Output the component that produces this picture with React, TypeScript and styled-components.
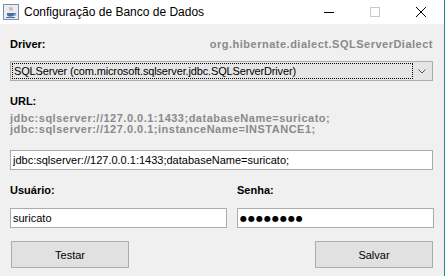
import React from 'react';
import styled, { createGlobalStyle } from 'styled-components';

const GlobalStyle = createGlobalStyle`
  html, body {
    margin: 0;
    padding: 0;
    background: #f0f0f0;
  }
`;

const Window = styled.div`
  box-sizing: border-box;
  width: 445px;
  height: 276px;
  display: flex;
  flex-direction: column;
  border-right: 1px solid #1f8a8a;
  background: #f0f0f0;
  font-family: 'Liberation Sans', Arial, sans-serif;
  overflow: hidden;
`;

const TitleBar = styled.div`
  height: 24px;
  flex: none;
  display: flex;
  align-items: center;
  background: #ffffff;
  padding-left: 3px;
`;

const TitleText = styled.span`
  margin-left: 5px;
  font-size: 12px;
  color: #000;
  flex: 1;
`;

const WinButton = styled.div<{ $w: number }>`
  width: ${(p) => p.$w}px;
  height: 24px;
  display: flex;
  align-items: center;
  justify-content: center;
`;

const Body = styled.div`
  flex: 1;
  display: flex;
  flex-direction: column;
  padding: 13px 11px 0 10px;
`;

const SpreadRow = styled.div`
  display: flex;
  justify-content: space-between;
  align-items: center;
  height: 14px;
`;

const Label = styled.div`
  font-size: 11px;
  font-weight: bold;
  color: #000;
  line-height: 14px;
`;

const Hint = styled.div`
  font-size: 11px;
  font-weight: bold;
  color: #8a8a8a;
  line-height: 11px;
  letter-spacing: 0.5px;
  white-space: nowrap;
`;

const Combo = styled.div`
  box-sizing: border-box;
  height: 20px;
  margin-top: 10px;
  display: flex;
  align-items: center;
  border: 1px solid #adadad;
  background: #e5e5e5;
  padding: 1px;
`;

const ComboValue = styled.div`
  box-sizing: border-box;
  flex: 1;
  height: 16px;
  border: 1px dotted #000;
  font-size: 11px;
  line-height: 14px;
  padding-left: 1px;
  color: #000;
  white-space: nowrap;
  letter-spacing: -0.15px;
`;

const ComboArrow = styled.div`
  width: 18px;
  display: flex;
  justify-content: center;
  align-items: center;
`;

const Field = styled.input<{ $dots?: boolean }>`
  box-sizing: border-box;
  width: 100%;
  height: 20px;
  border: 1px solid #acacac;
  background: #fff;
  font-family: ${(p) => (p.$dots ? "'DejaVu Sans', sans-serif" : "'Liberation Sans', Arial, sans-serif")};
  font-size: ${(p) => (p.$dots ? '8px' : '11px')};
  letter-spacing: ${(p) => (p.$dots ? '1px' : '0')};
  color: #000;
  padding: 0 2px;
  outline: none;
`;

const Section = styled.div<{ $top: number }>`
  margin-top: ${(p) => p.$top}px;
  display: flex;
  flex-direction: column;
`;

const TwoCols = styled.div<{ $top: number }>`
  margin-top: ${(p) => p.$top}px;
  display: grid;
  grid-template-columns: 217px 197px;
  column-gap: 10px;
`;

const Col = styled.div`
  display: flex;
  flex-direction: column;
  gap: 11px;
`;

const Buttons = styled.div`
  margin-top: 13px;
  display: flex;
  justify-content: space-between;
  padding-left: 1px;
`;

const Button = styled.button`
  box-sizing: border-box;
  width: 118px;
  height: 27px;
  border: 1px solid #adadad;
  background: #e1e1e1;
  font-family: 'Liberation Sans', Arial, sans-serif;
  font-size: 11px;
  color: #000;
  padding: 0;
`;

const JavaIcon = () => (
  <svg width="16" height="16" viewBox="0 0 16 16">
    <rect x="0.5" y="0.5" width="15" height="15" fill="#e8eef6" stroke="#7a8fae" />
    <path d="M7 3c-1 1 1 2 0 3.5M9 3.5c-1 1 1 1.8 0 3" stroke="#e07a1f" fill="none" strokeWidth="1" />
    <path d="M4 9h7v1.5c0 1.2-1 2-2 2H6c-1 0-2-.8-2-2z" fill="#4a6fa5" />
    <path d="M11 9.5h1.2c.8 0 .8 1.6 0 1.6H11" stroke="#4a6fa5" fill="none" />
    <path d="M3 13.5h9" stroke="#4a6fa5" />
  </svg>
);

export default function App() {
  return (
    <>
      <GlobalStyle />
      <Window>
        <TitleBar>
          <JavaIcon />
          <TitleText>Configuração de Banco de Dados</TitleText>
          <WinButton $w={46}>
            <svg width="10" height="10" viewBox="0 0 10 10">
              <path d="M0 5.5h10" stroke="#000" strokeWidth="1" />
            </svg>
          </WinButton>
          <WinButton $w={46}>
            <svg width="10" height="10" viewBox="0 0 10 10">
              <rect x="0.5" y="0.5" width="9" height="9" fill="none" stroke="#c8c8c8" />
            </svg>
          </WinButton>
          <WinButton $w={46}>
            <svg width="10" height="10" viewBox="0 0 10 10">
              <path d="M0 0L10 10M10 0L0 10" stroke="#000" strokeWidth="1" />
            </svg>
          </WinButton>
        </TitleBar>
        <Body>
          <SpreadRow>
            <Label>Driver:</Label>
            <Hint>org.hibernate.dialect.SQLServerDialect</Hint>
          </SpreadRow>
          <Combo>
            <ComboValue>SQLServer (com.microsoft.sqlserver.jdbc.SQLServerDriver)</ComboValue>
            <ComboArrow>
              <svg width="8" height="5" viewBox="0 0 8 5">
                <path d="M0.5 0.5L4 4L7.5 0.5" stroke="#555" fill="none" />
              </svg>
            </ComboArrow>
          </Combo>
          <Section $top={13}>
            <Label>URL:</Label>
            <Hint style={{ marginTop: 5 }}>jdbc:sqlserver://127.0.0.1:1433;databaseName=suricato;</Hint>
            <Hint>jdbc:sqlserver://127.0.0.1;instanceName=INSTANCE1;</Hint>
          </Section>
          <Section $top={15}>
            <Field readOnly value="jdbc:sqlserver://127.0.0.1:1433;databaseName=suricato;" />
          </Section>
          <TwoCols $top={13}>
            <Col>
              <Label>Usuário:</Label>
              <Field readOnly value="suricato" />
            </Col>
            <Col>
              <Label>Senha:</Label>
              <Field readOnly $dots value="●●●●●●●●" />
            </Col>
          </TwoCols>
          <Buttons>
            <Button>Testar</Button>
            <Button>Salvar</Button>
          </Buttons>
        </Body>
      </Window>
    </>
  );
}
